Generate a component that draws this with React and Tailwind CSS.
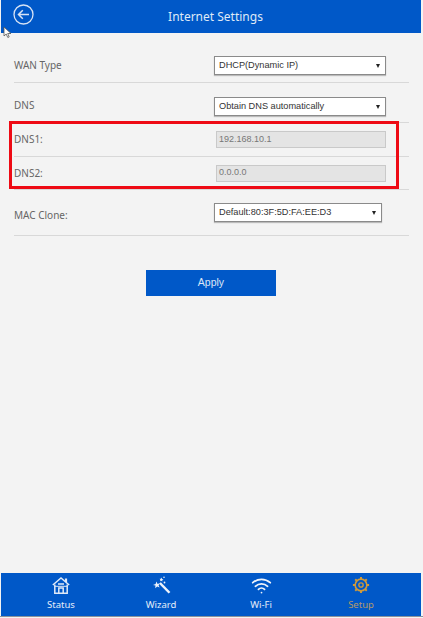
import { Wifi } from "lucide-react";

const selectBox = "flex h-[19px] items-center justify-between border border-[#8a8a8a] bg-white pl-[4px] pr-[5px] text-[9.2px] text-[#333] shadow-[0_1px_1px_#bbb]";

function Arrow() {
  return <span className="h-0 w-0 border-x-[2.5px] border-t-[4px] border-x-transparent border-t-[#222]" />;
}

function Row({ label, height, labelClass = "", children }) {
  return (
    <div className={`flex items-center justify-between border-b border-[#d8d8d8] ${height}`}>
      <span className={`font-['Noto_Sans',sans-serif] text-[10px] text-[#666] ${labelClass}`}>{label}</span>
      {children}
    </div>
  );
}

function FakeSelect({ value, width = "w-[172px]", margin = "mr-[23px]", className = "" }) {
  return (
    <div className={`${selectBox} ${width} ${margin} ${className}`}>
      <span>{value}</span>
      <Arrow />
    </div>
  );
}

function FakeInput({ value }) {
  return (
    <div className="mr-[23px] flex h-[17px] w-[170px] items-center border border-[#c9c9c9] bg-[#e4e4e4] pl-[2px] text-[9px] text-[#777]">
      {value}
    </div>
  );
}

function HomeIcon() {
  return (
    <svg width="18" height="17" viewBox="0 0 18 17" fill="none" stroke="#dfe9f7" strokeWidth="1.500">
      <path d="M.8 8 9 1l8.200 7" />
      <path d="M14 1.500v3.500" strokeWidth="2.200" />
      <path d="M2.800 7.500V16.200h12.400V7.500" />
      <path d="M6.800 16.200V11h4.400v5.200M6 7h6" />
      <path d="M2.800 9.300h12.400" strokeWidth="1" />
    </svg>
  );
}

function WandIcon() {
  return (
    <svg width="19" height="18" viewBox="0 0 19 18" fill="#eef3fb">
      <path d="M7 7.800 8.800 6.200 18.400 16 16.600 17.600z" />
      <path d="M4.500 5.500 5.600 8l2-.8-1 2.300 1 2-2.400-1-2 1.700.3-2.700L1 8.900l2.600-.8z" />
      <path d="M9.500 1.500l.6 1.400 1.400.4-1.200.8v1.400L9.200 4.800 8 5.200l.4-1.300-.8-1.100h1.300z" />
      <circle cx="12.500" cy="6.500" r="0.900" />
      <circle cx="12" cy="1.300" r="0.800" />
    </svg>
  );
}

function GearIcon() {
  return (
    <svg width="18" height="18" viewBox="0 0 20 20" fill="none" stroke="#d09a3a">
      <circle cx="10" cy="10" r="6.500" strokeWidth="1.800" />
      <circle cx="10" cy="10" r="2.400" strokeWidth="1.500" />
      <path d="M10 1v2.500M10 16.500V19M1 10h2.500M16.500 10H19M3.600 3.600l1.800 1.800M14.600 14.600l1.800 1.800M3.600 16.400l1.800-1.800M14.600 5.400l1.800-1.800" strokeWidth="2.200" />
    </svg>
  );
}

function NavItem({ icon, label, className = "text-[#e4edf9]" }) {
  return (
    <div className="flex w-[100px] flex-col items-center">
      <div className="flex h-[22px] items-center">{icon}</div>
      <span className={`mt-[2px] font-['Noto_Sans',sans-serif] text-[9.5px] leading-[13px] ${className}`}>{label}</span>
    </div>
  );
}

export default function App() {
  return (
    <div className="relative flex h-[618px] w-[423px] flex-col overflow-hidden bg-[#f3f3f3] font-['Liberation_Sans',sans-serif]">
      <header className="relative mx-[1px] flex h-[33px] w-[420px] items-center justify-center bg-[#0058c8] pl-[9px]">
        <svg className="absolute left-[12px] top-[4px]" width="21" height="21" viewBox="0 0 21 21" fill="none" stroke="#d7e3f5" strokeWidth="1.300">
          <circle cx="10.500" cy="10.500" r="9.500" />
          <path d="M16 10.500H5.500M9.800 6.200l-4.300 4.300 4.300 4.300" strokeWidth="1.500" />
        </svg>
        <h1 className="font-['Noto_Sans',sans-serif] text-[12px] text-[#dfe9f7]">Internet Settings</h1>
      </header>

      {/* arrow cursor captured in the screenshot */}
      <svg className="absolute left-[3px] top-[26px]" width="9" height="13" viewBox="0 0 9 13" fill="#fff" stroke="#555" strokeWidth="0.800">
        <path d="M1 1v9l2.200-2 1.600 3.500 1.400-.6L4.700 7.500H8z" />
      </svg>

      <main className="flex-1">
        <div className="ml-[14px] mr-[14px] mt-[16px]">
          <Row label="WAN Type" height="h-[34px]">
            <FakeSelect value="DHCP(Dynamic IP)" />
          </Row>
          <Row label="DNS" height="h-[40px]" labelClass="pt-[6px]">
            <FakeSelect value="Obtain DNS automatically" className="mt-[8px]" />
          </Row>
          <Row label="DNS1:" height="h-[34px]">
            <FakeInput value="192.168.10.1" />
          </Row>
          <Row label="DNS2:" height="h-[33px]">
            <FakeInput value="0.0.0.0" />
          </Row>
          <Row label="MAC Clone:" height="h-[46px]" labelClass="pt-[6px]">
            <FakeSelect value="Default:80:3F:5D:FA:EE:D3" width="w-[168px]" margin="mr-[27px]" />
          </Row>
        </div>
        <button className="ml-[146px] mt-[34px] block h-[26px] w-[130px] bg-[#0058c8] text-[10.500px] text-[#dbe6f6]">
          Apply
        </button>
      </main>

      {/* red annotation drawn over the DNS rows */}
      <div className="absolute left-[9px] top-[121px] h-[68px] w-[390px] border-[3px] border-[#ee0a14]" />

      <nav className="mx-[1px] flex h-[43px] w-[420px] items-start bg-[#0058c8] pl-[10px] pt-[1px]">
        <NavItem icon={<HomeIcon />} label="Status" />
        <NavItem icon={<WandIcon />} label="Wizard" />
        <NavItem icon={<Wifi size={21} color="#eef3fb" strokeWidth={2} />} label="Wi-Fi" />
        <NavItem icon={<GearIcon />} label="Setup" className="text-[#b39a6a]" />
      </nav>
      <div className="mb-[1px] h-[1px] bg-[#8a929c]" />
    </div>
  );
}
